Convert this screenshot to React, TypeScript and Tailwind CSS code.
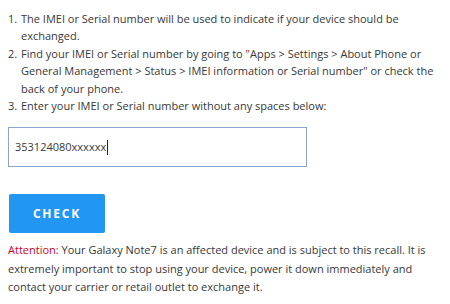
import React from "react";

const steps = [
  "The IMEI or Serial number will be used to indicate if your device should be exchanged.",
  'Find your IMEI or Serial number by going to "Apps > Settings > About Phone or General Management > Status > IMEI information or Serial number" or check the back of your phone.',
  "Enter your IMEI or Serial number without any spaces below:",
];

export default function App() {
  return (
    <div className="min-h-screen w-[450px] bg-white pl-2 pr-[5px] pt-[10px] font-['Open_Sans',sans-serif] text-[11px] text-[#383838]">
      <ol className="leading-[17.4px]">
        {steps.map((step, i) => (
          <li key={i} className="flex">
            <span className="w-[13px] shrink-0">{i + 1}.</span>
            <span>{step}</span>
          </li>
        ))}
      </ol>

      <div className="mt-[13px] flex h-10 w-[299px] items-center border-[1.5px] border-[#8ea5cf] px-[6px]">
        <span className="text-[11px] text-[#3a3a3a]">353124080xxxxxx</span>
        <span className="ml-px h-[15px] w-px bg-[#222]" />
      </div>

      <button
        type="button"
        className="mt-[27px] ml-px flex h-[39px] w-[96px] items-center justify-center rounded-[2px] bg-[#2196f3] text-[12px] font-bold tracking-[0.15em] text-white"
      >
        CHECK
      </button>

      <p className="mt-[8px] leading-[18.3px]">
        <span className="text-[#d0021b]">Attention:</span> Your Galaxy Note7 is an affected device and is subject to
        this recall. It is extremely important to stop using your device, power it down immediately and contact your
        carrier or retail outlet to exchange it.
      </p>
    </div>
  );
}
